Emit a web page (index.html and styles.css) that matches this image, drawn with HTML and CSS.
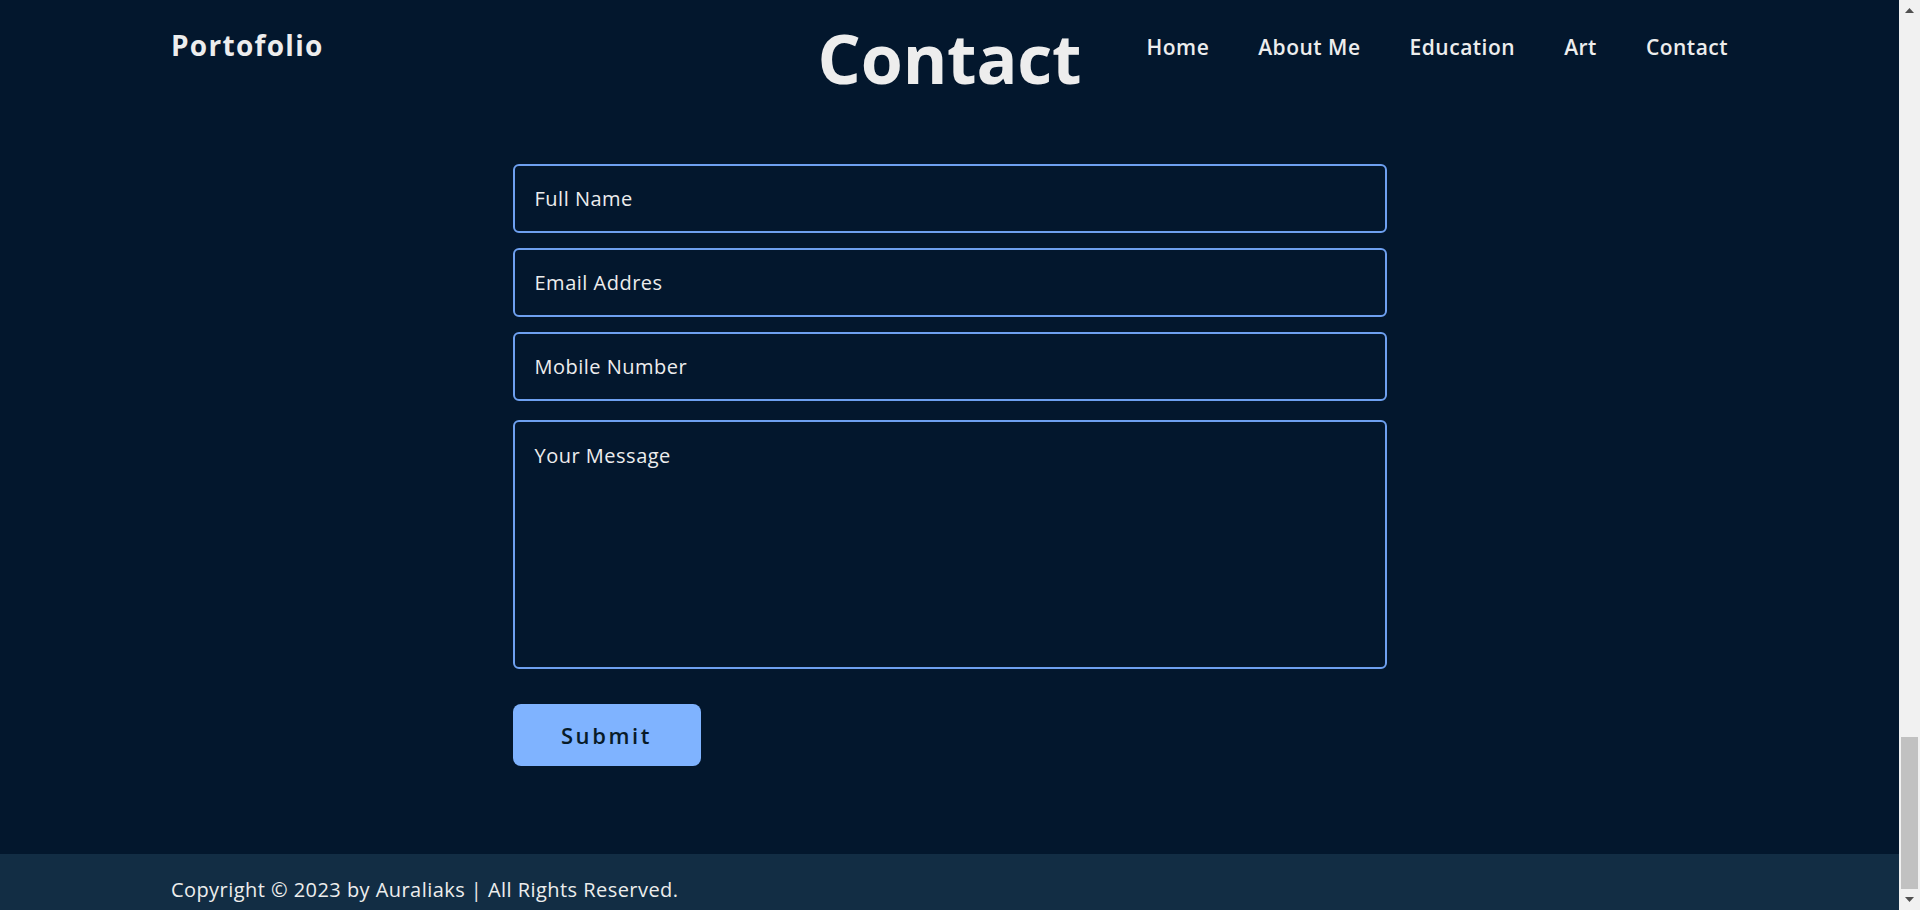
FILE: index.html
```html
<!DOCTYPE html>
<html lang="en">
<head>
<meta charset="utf-8">
<title>Contact</title>
<link rel="stylesheet" href="styles.css">
</head>
<body>
<div class="page">
  <header class="header">
    <a class="logo" href="#">Portofolio</a>
    <nav class="nav">
      <a href="#">Home</a>
      <a href="#">About Me</a>
      <a href="#">Education</a>
      <a href="#">Art</a>
      <a href="#">Contact</a>
    </nav>
  </header>
  <main class="contact">
    <h2 class="heading">Contact</h2>
    <form class="form">
      <input class="field" type="text" placeholder="Full Name">
      <input class="field" type="email" placeholder="Email Addres">
      <input class="field" type="text" placeholder="Mobile Number">
      <textarea class="field area" placeholder="Your Message"></textarea>
      <button class="btn" type="button">Submit</button>
    </form>
  </main>
  <footer class="footer">
    <p class="copy">Copyright © 2023 by Auraliaks | All Rights Reserved.</p>
  </footer>
</div>
<div class="scrollbar" aria-hidden="true">
  <div class="arrow">
    <svg width="9" height="5" viewBox="0 0 9 5"><polygon points="0,5 4.5,0 9,5" fill="#505050"/></svg>
  </div>
  <div class="track"><div class="thumb"></div></div>
  <div class="arrow">
    <svg width="9" height="5" viewBox="0 0 9 5"><polygon points="0,0 9,0 4.5,5" fill="#505050"/></svg>
  </div>
</div>
</body>
</html>
```
FILE: styles.css
```css
* {
  box-sizing: border-box;
}
body {
  margin: 0;
  height: 910px;
  display: flex;
  background: #03172d;
  color: #ededed;
  font-family: "Open Sans", "Liberation Sans", sans-serif;
  overflow: hidden;
}
.page {
  position: relative;
  flex: 1;
  display: flex;
  flex-direction: column;
}
.header {
  position: absolute;
  top: 0;
  left: 0;
  right: 0;
  height: 90px;
  padding: 0 9%;
  display: flex;
  justify-content: space-between;
  align-items: center;
  z-index: 10;
}
.logo {
  color: #ededed;
  text-decoration: none;
  font-size: 28px;
  font-weight: 700;
  letter-spacing: 1.3px;
}
.nav {
  display: flex;
  gap: 49px;
  margin-top: 3px;
}
.nav a {
  color: #ededed;
  text-decoration: none;
  font-size: 21px;
  font-weight: 600;
  letter-spacing: 0.5px;
}
.contact {
  flex: 1;
  padding-top: 23px;
}
.heading {
  margin: 0;
  text-align: center;
  font-size: 68px;
  line-height: 70px;
  font-weight: 700;
  letter-spacing: -0.2px;
}
.form {
  width: 874px;
  margin: 71px auto 0;
  display: flex;
  flex-direction: column;
  align-items: flex-start;
}
.field {
  display: block;
  width: 100%;
  height: 69px;
  margin: 0 0 15px;
  padding: 0 20px;
  border: 2px solid #6ea0f0;
  border-radius: 6px;
  background: transparent;
  color: #ededed;
  font-family: inherit;
  font-size: 20px;
  letter-spacing: 0.5px;
  outline: none;
}
.field::placeholder {
  color: #ededed;
  opacity: 1;
}
.area {
  height: 249px;
  margin-top: 4px;
  margin-bottom: 0;
  padding: 20px;
  resize: none;
}
.btn {
  margin-top: 35px;
  width: 188px;
  height: 62px;
  border: none;
  border-radius: 8px;
  background: #7fb3ff;
  color: #081b29;
  font-family: inherit;
  font-size: 22px;
  font-weight: 600;
  letter-spacing: 2.6px;
}
.footer {
  height: 56px;
  background: #122d44;
  padding: 0 9%;
}
.copy {
  margin: 0;
  padding-top: 24px;
  font-size: 20px;
  line-height: 24px;
  letter-spacing: 0.45px;
}
.scrollbar {
  width: 21px;
  height: 910px;
  background: #f1f1f1;
  display: flex;
  flex-direction: column;
}
.arrow {
  height: 21px;
  display: flex;
  align-items: center;
  justify-content: center;
}
.track {
  flex: 1;
  display: flex;
  flex-direction: column;
  justify-content: flex-end;
  padding: 0 2px;
}
.thumb {
  height: 152px;
  background: #c1c1c1;
}
```
